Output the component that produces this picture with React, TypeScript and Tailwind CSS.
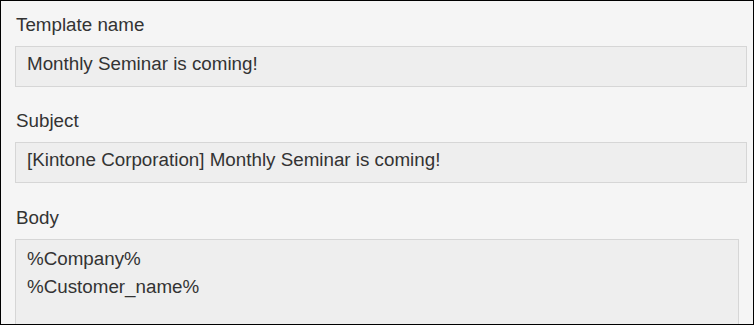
import React from "react";

function Label({ children }: { children: React.ReactNode }) {
  return <div className="h-[22px] leading-[22px] mb-[10px] pl-px">{children}</div>;
}

function Field({ label, value }: { label: string; value: string }) {
  return (
    <div>
      <Label>{label}</Label>
      <div className="box-border w-[732px] h-[41px] border border-[#d6d6d6] bg-[#eeeeee] pl-[11px] pt-[6px] leading-[22px] whitespace-nowrap">
        {value}
      </div>
    </div>
  );
}

export default function App() {
  return (
    <div
      className="box-border w-[754px] h-[325px] border border-black bg-[#f5f5f5] overflow-hidden text-[#333333] text-[18.8px]"
      style={{ fontFamily: '"Liberation Sans", Arial, sans-serif' }}
    >
      <div className="pl-[14px] pt-[13px] flex flex-col">
        <Field label="Template name" value="Monthly Seminar is coming!" />
        <div className="mt-[23px]">
          <Field label="Subject" value="[Kintone Corporation] Monthly Seminar is coming!" />
        </div>
        <div className="mt-[24px]">
          <Label>Body</Label>
          <div className="box-border w-[724px] h-[140px] border border-[#d6d6d6] bg-[#eeeeee] pl-[11px] pt-[5px] leading-[27.5px]">
            <div>%Company%</div>
            <div>%Customer_name%</div>
          </div>
        </div>
      </div>
    </div>
  );
}
